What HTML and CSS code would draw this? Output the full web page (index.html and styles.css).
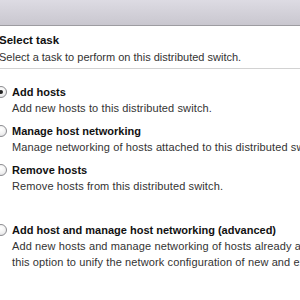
FILE: index.html
```html
<!DOCTYPE html>
<html>
<head>
<meta charset="utf-8">
<link rel="stylesheet" href="styles.css">
</head>
<body>
<div class="header"></div>
<div class="page">
  <div class="intro">
    <div class="title">Select task</div>
    <div class="subtitle">Select a task to perform on this distributed switch.</div>
  </div>
  <div class="divider"></div>
  <div class="options">
    <div class="option">
      <div class="row"><span class="radio checked"></span><span class="label">Add hosts</span></div>
      <div class="desc">Add new hosts to this distributed switch.</div>
    </div>
    <div class="option">
      <div class="row"><span class="radio"></span><span class="label">Manage host networking</span></div>
      <div class="desc">Manage networking of hosts attached to this distributed switch.</div>
    </div>
    <div class="option">
      <div class="row"><span class="radio"></span><span class="label">Remove hosts</span></div>
      <div class="desc">Remove hosts from this distributed switch.</div>
    </div>
    <div class="option advanced">
      <div class="row"><span class="radio"></span><span class="label">Add host and manage host networking (advanced)</span></div>
      <div class="desc">Add new hosts and manage networking of hosts already attached to this switch. Use<br>this option to unify the network configuration of new and existing hosts.</div>
    </div>
  </div>
</div>
</body>
</html>
```
FILE: styles.css
```css
html, body {
  margin: 0;
  padding: 0;
  background: #ffffff;
  overflow: hidden;
}
body {
  width: 300px;
  height: 300px;
  font-family: "Liberation Sans", Arial, sans-serif;
  font-size: 11px;
  color: #333;
}
.header {
  height: 25px;
  background: linear-gradient(#dddbe3, #c9c7cf);
  border-bottom: 1px solid #9d9ca1;
}
.page {
  padding-top: 6px;
}
.intro {
  margin-left: -1px;
  white-space: nowrap;
}
.title {
  font-weight: bold;
  font-size: 11.5px;
  line-height: 17px;
  color: #111;
}
.subtitle {
  line-height: 16px;
  color: #333;
}
.divider {
  height: 1px;
  background: #d2d2d2;
  margin-top: 3px;
}
.options {
  margin-left: -5px;
  padding-top: 15px;
  display: flex;
  flex-direction: column;
  gap: 7px;
}
.option.advanced {
  margin-top: 21px;
}
.row {
  display: flex;
  align-items: center;
  gap: 5px;
  height: 16px;
  white-space: nowrap;
}
.radio {
  flex: none;
  width: 10px;
  height: 10px;
  border: 1px solid #8c8c90;
  border-radius: 50%;
  background: radial-gradient(circle at 50% 35%, #ffffff 0%, #f2f2f2 50%, #d8d8dc 100%);
  position: relative;
}
.radio.checked::after {
  content: "";
  position: absolute;
  left: 3px;
  top: 3px;
  width: 4px;
  height: 4px;
  border-radius: 50%;
  background: #222;
}
.label {
  font-weight: bold;
  font-size: 11px;
  color: #111;
}
.desc {
  padding-left: 17px;
  line-height: 16px;
  letter-spacing: 0.12px;
  white-space: nowrap;
  color: #333;
}
```
